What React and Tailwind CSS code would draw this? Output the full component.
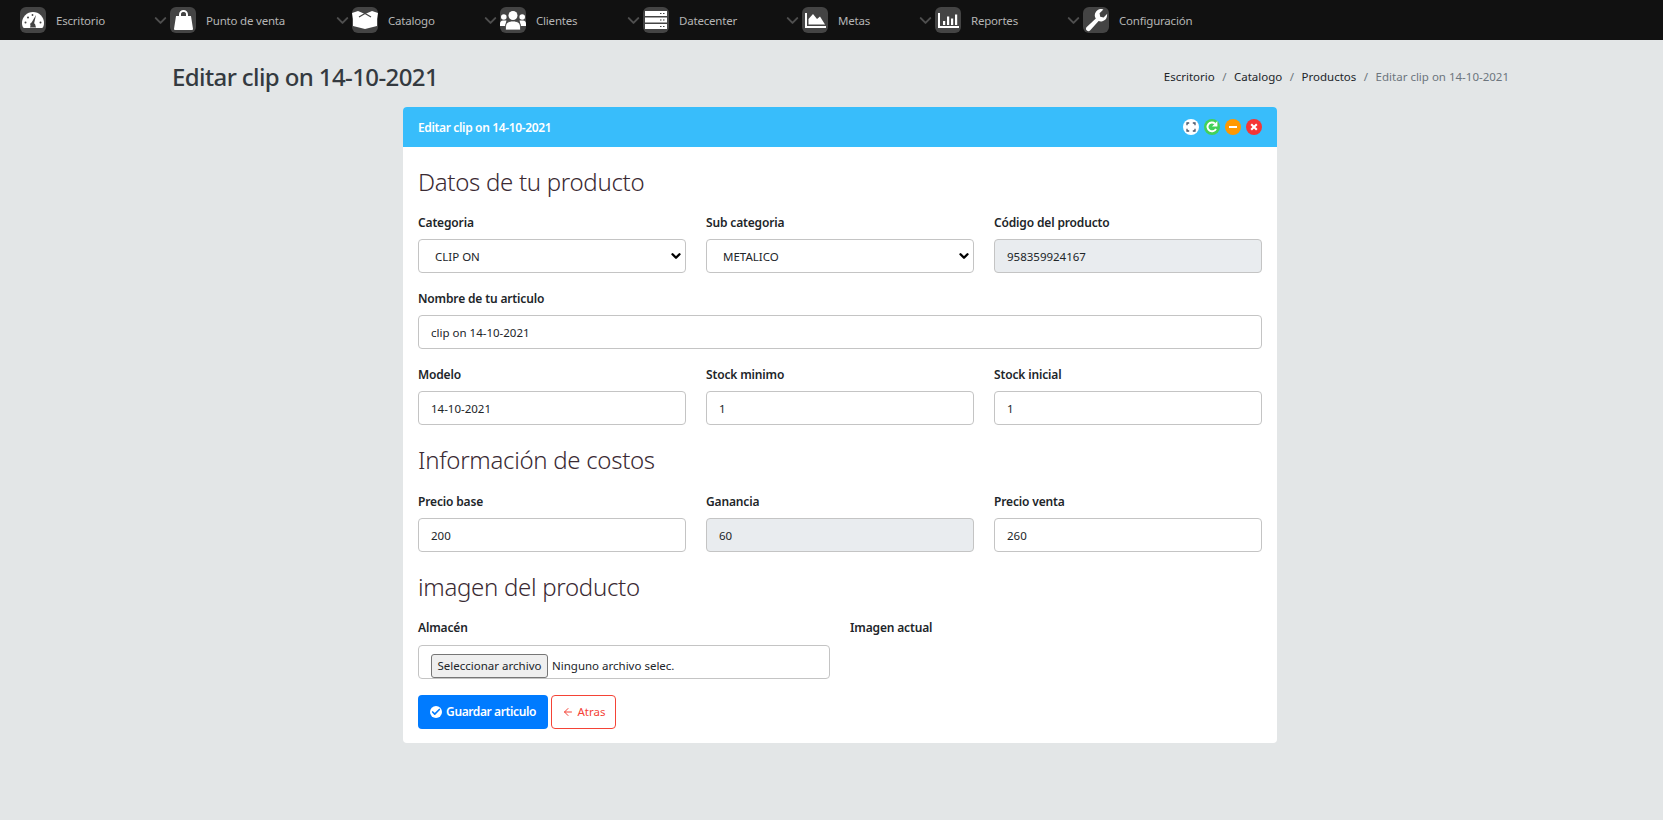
import React from "react";
import { ChevronDown, ArrowLeft, Check } from "lucide-react";

const font = "font-['Noto_Sans',sans-serif]";

const IconGauge = () => (
  <svg viewBox="0 0 22 16" className="w-[22px] h-4">
    <path d="M11 0A11 11 0 0 0 0 11c0 2 .8 5 2 5h18c1.200 0 2-3 2-5A11 11 0 0 0 11 0z" fill="#fff" />
    <path d="M14 3l-1.800 8a2.200 2.200 0 1 1-2.600-.5z" fill="#444" />
    <path d="M8 15.500h6L13 12H9z" fill="#444" />
    <circle cx="3.500" cy="10.500" r="1" fill="#444" />
    <circle cx="6" cy="5.500" r="1" fill="#444" />
    <circle cx="10.500" cy="3" r=".9" fill="#444" />
    <circle cx="18.500" cy="10.500" r="1" fill="#444" />
  </svg>
);
const IconBag = () => (
  <svg viewBox="0 0 19 20" className="w-[19px] h-5">
    <path d="M2 6h15l2 13a1 1 0 0 1-1 1H1a1 1 0 0 1-1-1z" fill="#fff" />
    <path d="M6 8V4.500a3.500 3.500 0 0 1 7 0V8" fill="none" stroke="#fff" strokeWidth="2" />
    <path d="M7.200 4.500a2.300 2.300 0 0 1 4.600 0V6H7.200z" fill="#444" />
  </svg>
);
const IconBox = () => (
  <svg viewBox="0 0 26 18" className="w-[26px] h-[18px]">
    <path d="M0 2l6-2 7 3 7-3 6 2-1 6v7l-12 3-12-3V8z" fill="#fff" />
    <path d="M7 6l6-3.500L19 6" fill="none" stroke="#444" strokeWidth="1.200" />
  </svg>
);
const IconUsers = () => (
  <svg viewBox="0 0 26 19" className="w-[26px] h-[19px]">
    <circle cx="13" cy="4.500" r="4.500" fill="#fff" />
    <circle cx="3.800" cy="6" r="2.800" fill="#fff" />
    <circle cx="22.200" cy="6" r="2.800" fill="#fff" />
    <path d="M0 15v-2c0-2 1-3.500 3-3.500h3.500L5 15zM26 15v-2c0-2-1-3.500-3-3.500h-3.500L21 15z" fill="#fff" />
    <path d="M5.500 19v-3c0-4 3-6 7.500-6s7.500 2 7.500 6v3z" fill="#fff" stroke="#444" strokeWidth=".8" />
  </svg>
);
const IconServer = () => (
  <svg viewBox="0 0 22 18" className="w-[22px] h-[18px]">
    <path d="M0 0h22v5H0zM0 6.500h22v5H0zM0 13h22v5H0z" fill="#fff" />
    <path d="M15 2h1.500v1H15zM18 2h1.500v1H18zM15 8.500h1.500v1H15zM18 8.500h1.500v1H18zM15 15h1.500v1H15zM18 15h1.500v1H18z" fill="#444" />
  </svg>
);
const IconArea = () => (
  <svg viewBox="0 0 21 15" className="w-[21px] h-[15px]">
    <path d="M0 0h2v13h19v2H0z" fill="#fff" />
    <path d="M3.500 11.500V6L8 1l4 5 3-2.500 5 8z" fill="#fff" />
  </svg>
);
const IconBars = () => (
  <svg viewBox="0 0 21 15" className="w-[21px] h-[15px]">
    <path d="M0 0h2v13h19v2H0z" fill="#fff" />
    <path d="M5 8h2.200v4H5zM9 3.500h2.200V12H9zM13 5.500h2.200V12H13zM17 1.500h2.200V12H17z" fill="#fff" />
  </svg>
);
const IconWrench = () => (
  <svg viewBox="0 0 24 24" className="size-[23px]">
    <path d="M23 6.500a6.500 6.500 0 0 1-8.800 6.100L5.500 22.300a2.500 2.500 0 1 1-3.700-3.400l9.500-8.900A6.500 6.500 0 0 1 19.200.500l-4 4 .7 3.500 3.500.8 3.800-3.800c0 .5-.2 1-.2 1.500z" fill="#fff" />
  </svg>
);

const navItems = [
  { label: "Escritorio", Icon: IconGauge, width: "w-[150px]" },
  { label: "Punto de venta", Icon: IconBag, width: "w-[182px]" },
  { label: "Catalogo", Icon: IconBox, width: "w-[148px]" },
  { label: "Clientes", Icon: IconUsers, width: "w-[143px]" },
  { label: "Datecenter", Icon: IconServer, width: "w-[159px]" },
  { label: "Metas", Icon: IconArea, width: "w-[133px]" },
  { label: "Reportes", Icon: IconBars, width: "w-[148px]" },
  { label: "Configuración", Icon: IconWrench, width: "w-[150px]", last: true },
];

function Label({ children, className = "mb-[7px]" }) {
  return <label className={`block h-[19px] text-[12px] leading-[19px] font-semibold tracking-[-0.15px] text-[#212529] ${className}`}>{children}</label>;
}

function Field({ label, value, disabled, select, className = "" }) {
  return (
    <div className={className}>
      <Label>{label}</Label>
      {select ? (
        <div className="h-[34px] rounded border border-[#c4c4c4] bg-white flex items-center justify-between pl-4 pr-[2px] text-[11.5px] text-[#212529]">
          <span className="pt-px">{value}</span>
          <ChevronDown className="size-3.5 text-black" strokeWidth={4} />
        </div>
      ) : (
        <div className={`h-[34px] rounded border border-[#c4c4c4] flex items-center pl-3 pt-px text-[11.5px] text-[#212529] ${disabled ? "bg-[#e9ecef]" : "bg-white"}`}>
          {value}
        </div>
      )}
    </div>
  );
}

function SectionTitle({ children }) {
  return <h3 className="text-[24px] leading-[29px] font-light tracking-[-0.3px] text-[#3a2a33]">{children}</h3>;
}

function Circle({ bg, children }) {
  return <span className={`size-4 rounded-full flex items-center justify-center ${bg}`}>{children}</span>;
}

export default function App() {
  return (
    <div className={`min-h-[820px] bg-[#e3e6e7] ${font}`}>
      {/* Top nav */}
      <nav className="h-10 bg-[#111111] flex items-center pl-5">
        {navItems.map(({ label, Icon, width, last }) => (
          <div key={label} className={`flex items-center h-10 shrink-0 ${width}`}>
            <span className="size-[26px] rounded-md bg-[#444444] flex items-center justify-center shrink-0">
              <Icon />
            </span>
            <span className="ml-[10px] pt-px text-[11.5px] tracking-[-0.2px] text-[#b5b5b5]">{label}</span>
            {!last && <ChevronDown className="ml-auto size-[19px] text-[#4f4f4f]" strokeWidth={2.5} />}
          </div>
        ))}
      </nav>

      {/* Page title */}
      <div className="flex items-center justify-between h-[67px] pt-[6px] pl-[172px] pr-[154px]">
        <h1 className="text-[24px] font-medium tracking-[-0.6px] text-[#343a40] leading-[36px]">Editar clip on 14-10-2021</h1>
        <div className="flex items-center text-[11.5px] text-[#212529]">
          <span>Escritorio</span>
          <span className="px-[7.5px] text-[#6c757d]">/</span>
          <span>Catalogo</span>
          <span className="px-[7.5px] text-[#6c757d]">/</span>
          <span>Productos</span>
          <span className="px-[7.5px] text-[#6c757d]">/</span>
          <span className="text-[#6c757d]">Editar clip on 14-10-2021</span>
        </div>
      </div>

      {/* Card */}
      <div className="w-[874px] ml-[403px] rounded bg-white overflow-hidden">
        <div className="h-10 bg-[#38bdfb] flex items-center justify-between px-[15px]">
          <span className="pt-px text-[12px] font-semibold tracking-[-0.35px] text-white">Editar clip on 14-10-2021</span>
          <div className="flex gap-[5px]">
            <Circle bg="bg-white">
              <svg viewBox="0 0 10 10" className="size-2.5">
                <path d="M1 3.200V1h2.200M6.800 1H9v2.200M9 6.800V9H6.800M3.200 9H1V6.800" fill="none" stroke="#4a5568" strokeWidth="1.300" />
              </svg>
            </Circle>
            <Circle bg="bg-[#42d158]">
              <svg viewBox="0 0 10 10" className="size-3">
                <path d="M8.300 6.500A3.700 3.700 0 1 1 7.500 2.200" fill="none" stroke="#fff" strokeWidth="1.600" />
                <path d="M9.500 0v4.500H5z" fill="#fff" />
              </svg>
            </Circle>
            <Circle bg="bg-[#ff9800]">
              <span className="w-2 h-0.5 bg-white" />
            </Circle>
            <Circle bg="bg-[#f53535]">
              <svg viewBox="0 0 10 10" className="size-2">
                <path d="M1.500 1.500l7 7M8.500 1.500l-7 7" fill="none" stroke="#fff" strokeWidth="2.600" />
              </svg>
            </Circle>
          </div>
        </div>

        <div className="px-[15px] pt-5 pb-[14px]">
          <SectionTitle>Datos de tu producto</SectionTitle>

          <div className="grid grid-cols-3 gap-x-5 mt-[17px]">
            <Field label="Categoria" value="CLIP ON" select />
            <Field label="Sub categoria" value="METALICO" select />
            <Field label="Código del producto" value="958359924167" disabled />
          </div>

          <Field label="Nombre de tu articulo" value="clip on 14-10-2021" className="mt-4" />

          <div className="grid grid-cols-3 gap-x-5 mt-4">
            <Field label="Modelo" value="14-10-2021" />
            <Field label="Stock minimo" value="1" />
            <Field label="Stock inicial" value="1" />
          </div>

          <div className="mt-5"><SectionTitle>Información de costos</SectionTitle></div>

          <div className="grid grid-cols-3 gap-x-5 mt-[18px]">
            <Field label="Precio base" value="200" />
            <Field label="Ganancia" value="60" disabled />
            <Field label="Precio venta" value="260" />
          </div>

          <div className="mt-5"><SectionTitle>imagen del producto</SectionTitle></div>

          <div className="grid grid-cols-2 gap-x-5 mt-[17px]">
            <div>
              <Label className="mb-2">Almacén</Label>
              <div className="h-[34px] rounded border border-[#c4c4c4] flex items-center pl-3 pt-2 text-[11.5px] text-[#212529]">
                <span className="h-6 w-[117px] bg-[#efefef] border border-[#767676] rounded-[3px] flex items-center justify-center mr-1">Seleccionar archivo</span>
                Ninguno archivo selec.
              </div>
            </div>
            <Label>Imagen actual</Label>
          </div>

          <div className="flex gap-[3px] mt-4">
            <button className="h-[34px] w-[130px] rounded bg-[#007bff] text-white text-[12px] font-semibold tracking-[-0.4px] flex items-center justify-center gap-1">
              <span className="size-3 rounded-full bg-white flex items-center justify-center">
                <Check className="size-2.5 text-[#007bff]" strokeWidth={4} />
              </span>
              Guardar articulo
            </button>
            <button className="h-[34px] w-[65px] rounded border border-[#f44336] bg-white text-[#f44336] text-[11.5px] flex items-center justify-center gap-1">
              <ArrowLeft className="size-3" />
              Atras
            </button>
          </div>
        </div>
      </div>
    </div>
  );
}
